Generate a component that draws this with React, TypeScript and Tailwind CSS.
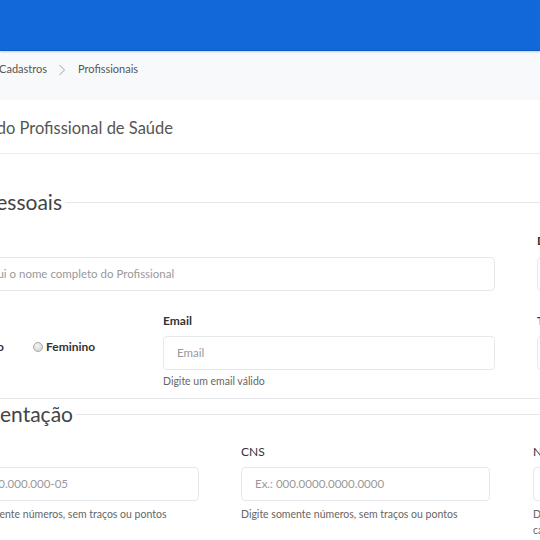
import React from "react";

const Chevron = () => (
  <svg width="8" height="12" viewBox="0 0 8 12" className="shrink-0">
    <polyline points="1.5,1 6.5,6 1.5,11" fill="none" stroke="#9aa0a6" strokeWidth="1" />
  </svg>
);

const Input = ({ placeholder }: { placeholder: string }) => (
  <div className="h-[34px] w-full rounded-[4px] border border-[#e6e8ec] bg-white flex items-center pl-[13px] text-[11.5px] text-[#999] whitespace-nowrap overflow-hidden">
    {placeholder}
  </div>
);

const Radio = () => (
  <span className="inline-block w-[10px] h-[10px] rounded-full border border-[#a8a8a8] bg-[radial-gradient(circle_at_40%_35%,#f4f4f4,#cfcfcf)] shrink-0" />
);

const Label = ({ children, bold = true }: { children: React.ReactNode; bold?: boolean }) => (
  <div className={"h-[16px] leading-[16px] text-[12px] text-[#333] whitespace-nowrap " + (bold ? "font-bold" : "font-normal")}>
    {children}
  </div>
);

const Help = ({ children }: { children: React.ReactNode }) => (
  <div className="text-[10.5px] leading-[16px] text-[#666] whitespace-nowrap">{children}</div>
);

export default function App() {
  return (
    <div className="w-[540px] h-[540px] overflow-hidden bg-white font-['Lato','Open_Sans',sans-serif]">
      {/* top bar */}
      <div className="h-[51px] bg-[#1268d9] border-b border-[#0f5bc0] shadow-[0_1px_2px_rgba(0,0,0,0.18)] relative z-10" />

      {/* breadcrumb */}
      <div className="h-[49px] bg-[#f8f9fb] flex items-start pt-[10px] text-[11px] text-[#555] whitespace-nowrap">
        <div className="w-[47px] shrink-0 flex justify-end items-center gap-[10px]">
          <span className="shrink-0">Início</span>
          <Chevron />
          <span className="shrink-0">Cadastros</span>
        </div>
        <div className="ml-[11px] mt-[3px] shrink-0">
          <Chevron />
        </div>
        <span className="ml-[12px] shrink-0">Profissionais</span>
      </div>

      {/* title */}
      <div className="h-[54px] border-b border-[#ececec] flex items-start pt-[16px] whitespace-nowrap">
        <div className="w-[173px] shrink-0 flex justify-end">
          <span className="shrink-0 text-[16.5px] text-[#555]">Cadastro do Profissional de Saúde</span>
        </div>
      </div>

      {/* legend: Dados Pessoais */}
      <div className="mt-[35px] flex items-center whitespace-nowrap">
        <div className="w-[62px] shrink-0 flex justify-end">
          <span className="shrink-0 text-[21px] leading-[26px] text-[#444]">Dados Pessoais</span>
        </div>
        <div className="ml-[3px] flex-1 h-px bg-[#e4e6ea]" />
      </div>

      {/* row 1 */}
      <div className="mt-[18px] flex">
        <div className="-ml-[62px] w-[557px] shrink-0">
          <Label>Nome</Label>
          <div className="mt-[8px]">
            <Input placeholder="Digite aqui o nome completo do Profissional" />
          </div>
        </div>
        <div className="ml-[42px] w-[200px] shrink-0">
          <Label>Data de Nascimento</Label>
          <div className="mt-[8px]">
            <Input placeholder="dd/mm/aaaa" />
          </div>
        </div>
      </div>

      {/* row 2 */}
      <div className="mt-[22px] flex items-start">
        <div className="w-[163px] h-[68px] shrink-0 flex items-center text-[12px] font-bold text-[#333] whitespace-nowrap">
          <div className="w-[4px] shrink-0 flex justify-end items-center gap-[4px]">
            <Radio />
            <span className="shrink-0">Masculino</span>
          </div>
          <div className="ml-[29px] flex items-center gap-[3px]">
            <Radio />
            <span>Feminino</span>
          </div>
        </div>
        <div className="w-[332px] shrink-0">
          <Label>Email</Label>
          <div className="mt-[7px]">
            <Input placeholder="Email" />
          </div>
          <div className="mt-[3px]">
            <Help>Digite um email válido</Help>
          </div>
        </div>
        <div className="ml-[42px] w-[200px] shrink-0">
          <Label>Telefone</Label>
          <div className="mt-[7px]">
            <Input placeholder="(00) 00000-0000" />
          </div>
        </div>
      </div>

      {/* separator */}
      <div className="mt-[9px] h-px bg-[#e4e6ea]" />

      {/* legend: Documentação */}
      <div className="mt-[2px] flex items-center whitespace-nowrap">
        <div className="w-[73px] shrink-0 flex justify-end">
          <span className="shrink-0 text-[21px] leading-[26px] text-[#444]">Documentação</span>
        </div>
        <div className="ml-[3px] flex-1 h-px bg-[#e4e6ea]" />
      </div>

      {/* row 3 */}
      <div className="mt-[17px] flex">
        <div className="-ml-[50px] w-[249px] shrink-0">
          <Label bold={false}>CPF</Label>
          <div className="mt-[7px]">
            <Input placeholder="Ex.: 000.000.000-05" />
          </div>
          <div className="mt-[5px]">
            <Help>Digite somente números, sem traços ou pontos</Help>
          </div>
        </div>
        <div className="ml-[42px] w-[249px] shrink-0">
          <Label bold={false}>CNS</Label>
          <div className="mt-[7px]">
            <Input placeholder="Ex.: 000.0000.0000.0000" />
          </div>
          <div className="mt-[5px]">
            <Help>Digite somente números, sem traços ou pontos</Help>
          </div>
        </div>
        <div className="ml-[43px] w-[200px] shrink-0">
          <Label bold={false}>Nº do Conselho</Label>
          <div className="mt-[7px]">
            <Input placeholder="" />
          </div>
          <div className="mt-[5px]">
            <Help>Digite o número do registro</Help>
            <Help>cadastrado no conselho</Help>
          </div>
        </div>
      </div>
    </div>
  );
}
